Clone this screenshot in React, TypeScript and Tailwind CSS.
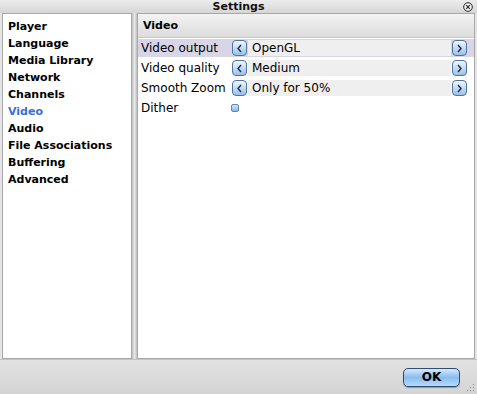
import React from "react";

const font = { fontFamily: '"DejaVu Sans", "Liberation Sans", sans-serif' };

function ArrowBtn({ dir }: { dir: "l" | "r" }) {
  return (
    <div className="w-[15px] h-[16px] rounded-[4px] border border-[#4f74a0] bg-gradient-to-b from-[#f1f7fd] via-[#c4dbf4] to-[#9cc0ea] flex items-center justify-center shrink-0">
      <svg width="7" height="9" viewBox="0 0 7 9">
        {dir === "l" ? (
          <path d="M5 1 L2 4.5 L5 8" fill="none" stroke="#1c2c44" strokeWidth="1.4" />
        ) : (
          <path d="M2 1 L5 4.5 L2 8" fill="none" stroke="#1c2c44" strokeWidth="1.4" />
        )}
      </svg>
    </div>
  );
}

function ComboRow({ label, value, active }: { label: string; value: string; active?: boolean }) {
  return (
    <div className={`h-[18px] my-[1px] flex items-center pl-[3px] pr-[7px] ${active ? "bg-[#d8d6e6]" : ""}`}>
      <div className="w-[91px] shrink-0 text-[12px] leading-[18px] text-black whitespace-nowrap">{label}</div>
      <ArrowBtn dir="l" />
      <div className="flex-1 h-[16px] bg-[#efefef] mx-[1px] pl-[4px] text-[12px] leading-[16px] text-black whitespace-nowrap">{value}</div>
      <ArrowBtn dir="r" />
    </div>
  );
}

export default function App() {
  const items = ["Player", "Language", "Media Library", "Network", "Channels", "Video", "Audio", "File Associations", "Buffering", "Advanced"];
  return (
    <div className="w-[477px] h-[394px] bg-[#e4e4e4] flex flex-col overflow-hidden" style={font}>
      {/* Title bar */}
      <div className="h-[13px] relative bg-gradient-to-b from-[#ececec] to-[#d6d6d6] shrink-0">
        <div className="text-center text-[11px] font-bold leading-[13px] text-[#111]">Settings</div>
        <svg className="absolute right-[4px] top-[2px]" width="10" height="10" viewBox="0 0 10 10">
          <circle cx="5" cy="5" r="4.3" fill="#f4f4f4" stroke="#222" strokeWidth="1" />
          <path d="M3.2 3.2 L6.8 6.8 M6.8 3.2 L3.2 6.8" stroke="#222" strokeWidth="1.1" />
        </svg>
      </div>
      {/* Main */}
      <div className="flex-1 flex pl-[2px] pr-[2px] min-h-0">
        {/* Left list */}
        <div className="w-[130px] bg-white border border-[#a8a8a8] pt-[4px] pl-[5px]">
          {items.map((it) => (
            <div
              key={it}
              className={`text-[11px] font-bold leading-[17px] whitespace-nowrap ${it === "Video" ? "text-[#3a6fd6]" : "text-black"}`}
            >
              {it}
            </div>
          ))}
        </div>
        {/* Splitter */}
        <div className="w-[5px] bg-gradient-to-r from-[#bdbdbd] via-[#e8e8e8] to-[#bdbdbd]" />
        {/* Right panel */}
        <div className="flex-1 bg-white border border-[#a8a8a8] flex flex-col">
          <div className="h-[24px] bg-gradient-to-b from-[#f3f3f3] to-[#dcdcdc] border-b border-[#c8c8c8] pl-[5px] text-[11px] font-bold leading-[24px] text-black">
            Video
          </div>
          <ComboRow label="Video output" value="OpenGL" active />
          <ComboRow label="Video quality" value="Medium" />
          <ComboRow label="Smooth Zoom" value="Only for 50%" />
          <div className="h-[18px] my-[1px] flex items-center pl-[3px]">
            <div className="w-[90px] shrink-0 text-[12px] leading-[18px] text-black">Dither</div>
            <div className="w-[8px] h-[8px] rounded-[2px] border border-[#5f86b8] bg-gradient-to-b from-[#d4e6f8] to-[#8db6e6]" />
          </div>
        </div>
      </div>
      {/* Bottom bar */}
      <div className="h-[35px] shrink-0 bg-gradient-to-b from-[#e2e2e2] to-[#d4d4d4] border-t border-[#c4c4c4] flex items-center justify-end pr-[17px] relative">
        <div className="w-[57px] h-[19px] rounded-[5px] border border-[#2f4e75] bg-gradient-to-b from-[#d6e8fa] via-[#88bdf0] to-[#b6dafc] flex items-center justify-center text-[12px] font-bold text-black shadow-[0_1px_1px_rgba(0,0,0,0.3)]">
          OK
        </div>
        <svg className="absolute right-[2px] bottom-[2px]" width="8" height="8" viewBox="0 0 8 8">
          <rect x="6" y="0" width="1" height="1" fill="#888" />
          <rect x="3" y="3" width="1" height="1" fill="#888" />
          <rect x="6" y="3" width="1" height="1" fill="#888" />
          <rect x="0" y="6" width="1" height="1" fill="#888" />
          <rect x="3" y="6" width="1" height="1" fill="#888" />
          <rect x="6" y="6" width="1" height="1" fill="#888" />
        </svg>
      </div>
    </div>
  );
}
